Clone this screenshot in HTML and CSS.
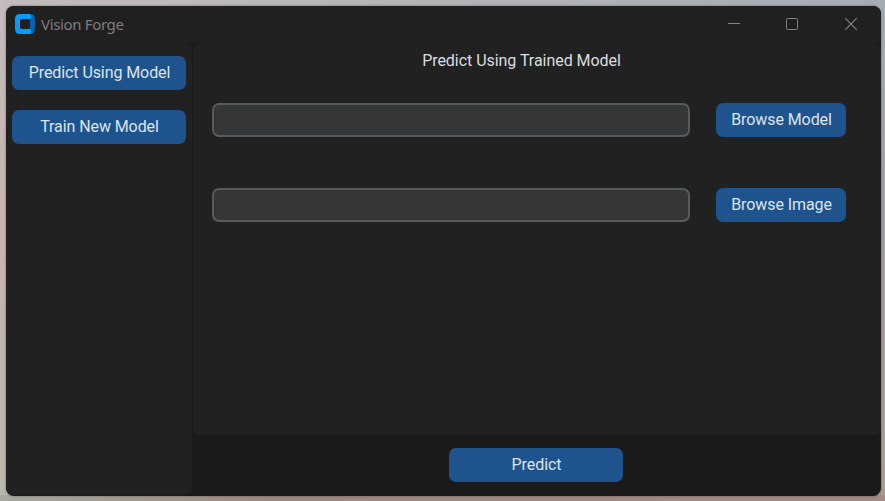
FILE: index.html
```html
<!DOCTYPE html>
<html lang="en">
<head>
<meta charset="utf-8">
<title>Vision Forge</title>
<link rel="stylesheet" href="styles.css">
</head>
<body>
<div class="window">
  <header class="titlebar">
    <svg class="logo" viewBox="0 0 20 20" aria-hidden="true">
      <path d="M10 0h5q5 0 5 5v10q0 5-5 5h-5z" fill="#0560ad"/>
      <path d="M5 0h9q2.500 0 2.500 2.500T14 5v10q2.500 0 2.500 2.500T14 20H5q-5 0-5-5V5q0-5 5-5z" fill="#0a99fc"/>
      <path d="M14 5h2v10h-2z" fill="#0560ad"/>
      <rect x="5" y="5" width="10" height="10" rx="2" fill="#202020"/>
    </svg>
    <span class="title">Vision Forge</span>
    <div class="controls">
      <svg viewBox="0 0 12 12"><path d="M0 5.500h12"/></svg>
      <svg viewBox="0 0 12 12"><rect x=".5" y=".5" width="11" height="11" rx="1"/></svg>
      <svg viewBox="0 0 12 12"><path d="M.3.300l11.400 11.400M11.700.300L.3 11.700" stroke-width="1.200"/></svg>
    </div>
  </header>
  <div class="body">
    <nav class="sidebar">
      <button class="btn">Predict Using Model</button>
      <button class="btn">Train New Model</button>
    </nav>
    <main class="content">
      <section class="panel">
        <h1>Predict Using Trained Model</h1>
        <div class="row"><input type="text" aria-label="Model"><button class="btn">Browse Model</button></div>
        <div class="row"><input type="text" aria-label="Image"><button class="btn">Browse Image</button></div>
      </section>
      <footer class="footer"><button class="btn">Predict</button></footer>
    </main>
  </div>
</div>
</body>
</html>
```
FILE: styles.css
```css
* { box-sizing: border-box; }
body {
  margin: 0;
  height: 501px;
  padding: 6px 4px 5px 6px;
  overflow: hidden;
  font-family: Roboto, sans-serif;
  background:
    linear-gradient(to right, #a9aaa0, #9b8a82 30%, #a38c86) 0 100% / 100% 6px no-repeat,
    linear-gradient(#a5adb3, #a0a0a6 40%, #b09a95) 100% 0 / 5px 100% no-repeat,
    linear-gradient(#c4bcbd, #c8b4b0 50%, #b9b9ab) 0 0 / 7px 100% no-repeat,
    linear-gradient(to right, #c4bcbd, #a5adb3);
}
.window {
  display: flex;
  flex-direction: column;
  height: 490px;
  border-radius: 8px;
  overflow: hidden;
  background: #1a1a1a;
  box-shadow: 0 0 3px rgba(0, 0, 0, .35);
}
.titlebar {
  display: flex;
  align-items: center;
  height: 37px;
  padding: 0 24px 1px 9px;
  background: #202020;
}
.logo { width: 20px; height: 20px; }
.title {
  margin-left: 6px;
  font: 15px "Noto Sans", sans-serif;
  letter-spacing: -.35px;
  color: #7d7d7d;
}
.controls { display: flex; gap: 46.500px; margin-left: auto; }
.controls svg {
  width: 12px;
  height: 12px;
  fill: none;
  stroke: #838383;
  stroke-width: 1;
}
.controls svg:first-child { margin-right: -.5px; }
.controls svg:nth-child(2) { margin-right: .5px; }
.body { display: flex; gap: 1px; height: 452px; }
.sidebar {
  display: flex;
  flex-direction: column;
  gap: 20px;
  width: 186px;
  padding: 13px 6px;
  border-radius: 7px;
  background: #212121;
}
.btn {
  height: 34px;
  padding: 0 0 1px 1px;
  border: 0;
  border-radius: 7px;
  background: #1f538d;
  color: #dce4ee;
  font: 16px Roboto, sans-serif;
  letter-spacing: -.08px;
}
.content { flex: 1; }
.panel {
  height: 392px;
  padding: 8px 35px 0 19px;
  border-radius: 7px;
  background: #212121;
}
h1 {
  margin: 0 -6px 33px -19px;
  padding-right: 2px;
  font-size: 16px;
  font-weight: 400;
  line-height: 19px;
  text-align: center;
  letter-spacing: -.04px;
  color: #dcdee0;
}
.row { display: flex; justify-content: space-between; margin-bottom: 51px; }
.row input {
  width: 478px;
  height: 34px;
  border: 2px solid #565b5e;
  border-radius: 7px;
  background: #343638;
}
.row .btn { width: 130px; }
.footer { display: flex; padding: 13px 0 0 256px; }
.footer .btn { width: 174px; }
```
